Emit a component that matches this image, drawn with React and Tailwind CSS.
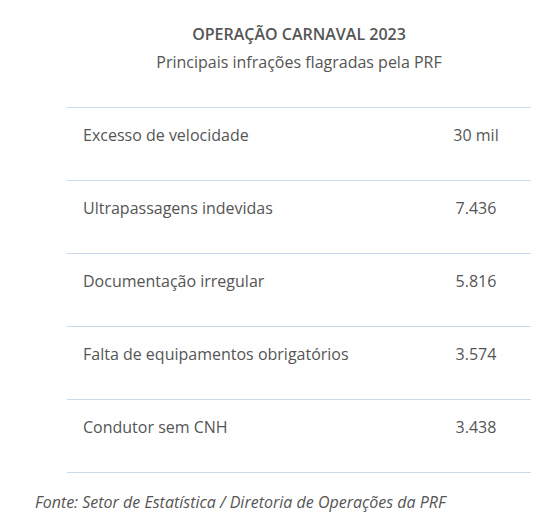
export default function App() {
  const rows = [
    ["Excesso de velocidade", "30 mil"],
    ["Ultrapassagens indevidas", "7.436"],
    ["Documentação irregular", "5.816"],
    ["Falta de equipamentos obrigatórios", "3.574"],
    ["Condutor sem CNH", "3.438"],
  ];
  return (
    <div className="w-[552px] h-[526px] bg-white text-[#555] font-['Open_Sans',sans-serif] pt-[22px]">
      <div className="ml-[67px] w-[464px]">
        <h2 className="text-center text-[16px] leading-[24px] font-semibold">OPERAÇÃO CARNAVAL 2023</h2>
        <p className="text-center text-[16px] leading-[24px] mt-[4px]">Principais infrações flagradas pela PRF</p>
        <div className="mt-[33px] border-t border-[#c9d8ea]">
          {rows.map(([a, b]) => (
            <div key={a} className="flex border-b border-[#c9d8ea] h-[73px] pt-[15px]">
              <div className="flex-1 pl-[16px] text-[16px] leading-[24px]">{a}</div>
              <div className="w-[110px] text-center text-[16px] leading-[24px]">{b}</div>
            </div>
          ))}
        </div>
      </div>
      <p className="ml-[35px] mt-[17px] italic text-[16px] leading-[24px]">Fonte: Setor de Estatística / Diretoria de Operações da PRF</p>
    </div>
  );
}
